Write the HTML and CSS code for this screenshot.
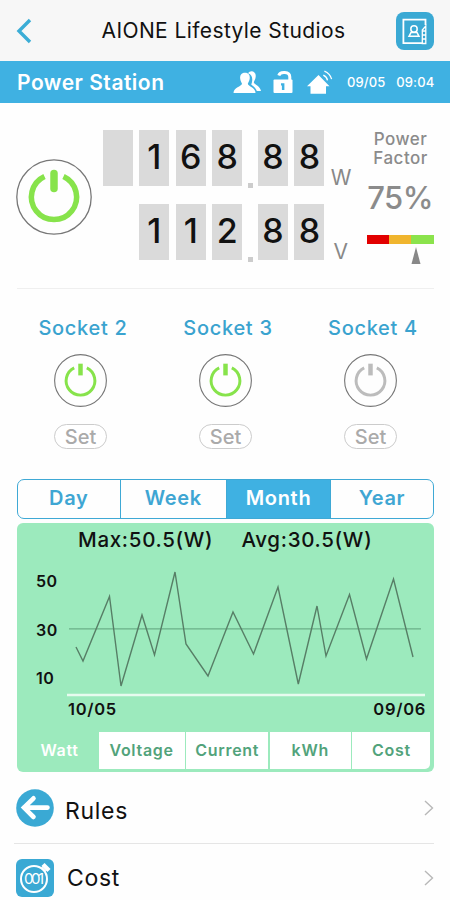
FILE: index.html
```html
<!DOCTYPE html>
<html lang="en">
<head>
    <meta charset="UTF-8">
    <meta name="viewport" content="width=device-width, initial-scale=1.0">
    <title>Power Station</title>
    <link rel="stylesheet" href="styles.css">
</head>
<body>
    <!-- Reusable icons -->
    <svg class="sprite" width="0" height="0">
        <symbol id="power" viewBox="0 0 52 52">
            <circle cx="26" cy="26" r="25.4" fill="none" stroke="#777" stroke-width="1.1"/>
            <path d="M19.8 13.6A14.1 14.1 0 1 0 32.2 13.6" fill="none" stroke="currentColor" stroke-width="2.9"/>
            <path d="M26 9.5V21" fill="none" stroke="currentColor" stroke-width="4.4"/>
        </symbol>
        <symbol id="chevron" viewBox="0 0 10 16">
            <path d="M1 1L8.5 8L1 15" fill="none" stroke="#b8b8b8" stroke-width="1.4"/>
        </symbol>
    </svg>

    <header class="top">
        <svg class="back" width="16" height="26" viewBox="0 0 16 26">
            <path d="M14 2L3 13L14 24" fill="none" stroke="#3badd6" stroke-width="3.4"/>
        </svg>
        <h1>AIONE Lifestyle Studios</h1>
        <svg class="contacts" width="38" height="38" viewBox="0 0 38 38">
            <rect width="38" height="38" rx="8" fill="#3aa9d4"/>
            <g fill="none" stroke="#fff">
                <path d="M29.500 13V7.600H7.400V31.200H27" stroke-width="1.800"/>
                <path d="M26.300 31.500V18L29.800 14V31.500Z" stroke-width="1.300"/>
                <path d="M26 19H30M26 23H30M26 27H30" stroke-width="1.500"/>
                <circle cx="18" cy="17" r="3.2" stroke-width="1.5"/>
                <path d="M13 24.300L15 20.500H21L23 24.300Z" stroke-width="1.500"/>
            </g>
        </svg>
    </header>

    <div class="station">
        <h2>Power Station</h2>
        <div class="status">
            <svg width="29" height="24" viewBox="0 0 29 24" fill="#fff">
                <path d="M15 3.2C17-.3 23.2.6 22.7 6.5C22.5 9.3 21.4 10.7 20.8 12.2C21.3 14.8 27 15.6 28 21H23.8C22.7 17.5 20 16.5 18.2 14.6C19.7 11 20.4 5 15 3.2Z"/>
                <path d="M12 2.7C15.7 2.7 17.2 5.3 16.7 8.7C16.4 11 15.3 12.3 14.8 13.7C15.3 16.6 22.3 17 22.5 23H.5C.7 17 8.4 16.6 9 13.7C8.5 12.3 7.4 11 7.2 8.7C6.8 5.3 8.3 2.7 12 2.7Z"/>
            </svg>
            <svg class="lock" width="20" height="24" viewBox="0 0 20 24">
                <path d="M5.8 5.5C7 1.3 16.8 1.2 16.8 7V11" fill="none" stroke="#fff" stroke-width="3"/>
                <rect x=".5" y="9.500" width="19" height="13.500" rx="1" fill="#fff"/>
                <path d="M8 13.200H11.400V20H8.900V15.500H8Z" fill="#3fb1e2"/>
            </svg>
            <svg width="28" height="25" viewBox="0 0 28 25">
                <path d="M11.500 5L22.500 16.200H19V23.800H3.500V16.200H0Z" fill="#fff"/>
                <path d="M16.300 5.200Q19.900 6.800 20.500 10.300M17.400 1.100Q23.200 3.600 24.600 9.200" fill="none" stroke="#fff" stroke-width="1.300"/>
            </svg>
        </div>
        <div class="clock"><span>09/05</span><span>09:04</span></div>
    </div>

    <section class="meter">
        <svg class="main-power on" width="76" height="76" viewBox="0 0 76 76">
            <circle cx="38" cy="38" r="37.200" fill="none" stroke="#777" stroke-width="1.300"/>
            <path d="M28.500 17.500A22.600 22.600 0 1 0 47.500 17.500" fill="none" stroke="currentColor" stroke-width="5.500"/>
            <path d="M38 14.500V29.500" fill="none" stroke="currentColor" stroke-width="7.500" stroke-linecap="round"/>
        </svg>

        <div class="readings">
            <div class="reading">
                <span class="digit"></span><span class="digit">1</span><span class="digit">6</span><span class="digit">8</span>
                <i class="dot"></i>
                <span class="digit">8</span><span class="digit">8</span>
                <span class="unit">W</span>
            </div>
            <div class="reading volts">
                <span class="digit">1</span><span class="digit">1</span><span class="digit">2</span>
                <i class="dot"></i>
                <span class="digit">8</span><span class="digit">8</span>
                <span class="unit">V</span>
            </div>
        </div>

        <div class="factor">
            <p>Power<br>Factor</p>
            <strong>75%</strong>
            <div class="scale"><i class="low"></i><i class="mid"></i><i class="high"></i></div>
            <svg class="pointer" width="10" height="17" viewBox="0 0 10 17">
                <path d="M5 0L9.5 17H.5Z" fill="#888"/>
            </svg>
        </div>
    </section>

    <section class="sockets">
        <div class="socket">
            <h3>Socket 2</h3>
            <svg class="on" width="53" height="53"><use href="#power"/></svg>
            <button class="set">Set</button>
        </div>
        <div class="socket">
            <h3>Socket 3</h3>
            <svg class="on" width="53" height="53"><use href="#power"/></svg>
            <button class="set">Set</button>
        </div>
        <div class="socket">
            <h3>Socket 4</h3>
            <svg class="off" width="53" height="53"><use href="#power"/></svg>
            <button class="set">Set</button>
        </div>
    </section>

    <nav class="periods">
        <a>Day</a>
        <a>Week</a>
        <a class="active">Month</a>
        <a>Year</a>
    </nav>

    <section class="chart">
        <div class="summary"><span>Max:50.5(W)</span><span>Avg:30.5(W)</span></div>
        <div class="plot">
            <div class="y-axis"><span>50</span><span>30</span><span>10</span></div>
            <svg width="358" height="140" viewBox="67 557 358 140">
                <path d="M69 628.8H421" stroke="#6aaf88" stroke-width="1.3"/>
                <polyline points="76,647 83,661 109.5,596.5 121,686 142,615 154.5,655 175,572 186,644 208,676 233,612 253.5,654 278,587 298.3,684 317,606 326,656 349.5,594.5 366.5,659 393.5,579 413,657" fill="none" stroke="#577e66" stroke-width="1.4"/>
                <path d="M67 695H425" stroke="#e7fbef" stroke-width="2.4"/>
            </svg>
        </div>
        <div class="x-axis"><span>10/05</span><span>09/06</span></div>
        <div class="measures">
            <a class="active">Watt</a>
            <a>Voltage</a>
            <a>Current</a>
            <a>kWh</a>
            <a>Cost</a>
        </div>
    </section>

    <div class="menu">
        <a class="item">
            <svg width="38" height="38" viewBox="0 0 38 38">
                <circle cx="19" cy="19" r="18.8" fill="#3aa9d4"/>
                <path d="M31.5 18.6H8M17.5 9.3L8 18.6L17.5 28" fill="none" stroke="#fff" stroke-width="4.6" stroke-linecap="round"/>
            </svg>
            <span>Rules</span>
            <svg class="go" width="10" height="16"><use href="#chevron"/></svg>
        </a>
        <a class="item cost">
            <svg width="38" height="38" viewBox="0 0 38 38">
                <rect width="38" height="38" rx="6" fill="#3aa9d4"/>
                <circle cx="18" cy="20" r="13" fill="none" stroke="#fff" stroke-width="2"/>
                <path d="M27 5.5L33 11.5" stroke="#fff" stroke-width="4.5"/>
                <path d="M25.5 8.5L29.5 12.5" stroke="#fff" stroke-width="2"/>
                <text x="18" y="25.3" text-anchor="middle" textLength="20" class="counter">001</text>
            </svg>
            <span>Cost</span>
            <svg class="go" width="10" height="16"><use href="#chevron"/></svg>
        </a>
    </div>
</body>
</html>
```

FILE: styles.css
```css
* {
    box-sizing: border-box;
}

body {
    margin: 0;
    height: 900px;
    overflow: hidden;
    background: #fefefe;
    font-family: Inter, "Liberation Sans", sans-serif;
    color: #111;
}

h1, h2, h3, p {
    margin: 0;
    font-weight: 400;
}

svg {
    display: block;
    flex-shrink: 0;
}

.sprite {
    position: absolute;
}

/* Header */
.top {
    display: flex;
    align-items: center;
    height: 61px;
    padding: 0 16px;
    background: #f7f7f7;
}

.top h1 {
    flex: 1;
    padding-left: 19px;
    text-align: center;
    font-size: 21px;
    letter-spacing: 0.4px;
    white-space: nowrap;
}

.station {
    display: flex;
    align-items: center;
    height: 42px;
    padding-left: 17px;
    background: #3fb1e2;
    color: #fff;
}

.station h2 {
    width: 216px;
    font-size: 21px;
    font-weight: 600;
    letter-spacing: 0.5px;
}

.status {
    display: flex;
    align-items: center;
    gap: 11px;
}

.lock {
    margin-right: 3px;
}

.clock {
    display: flex;
    gap: 11px;
    margin-left: 12px;
    font-size: 13px;
    font-weight: 500;
    letter-spacing: 0.1px;
}

/* Readings */
.meter {
    display: flex;
    height: 186px;
    margin: 0 16px 0 17px;
    border-bottom: 1px solid #efefef;
}

.main-power {
    margin: 56px 10px 0 -1px;
}

.on {
    color: #87e34b;
}

.off {
    color: #bcbcbc;
}

.readings {
    display: flex;
    flex-direction: column;
    align-items: flex-start;
    gap: 18px;
    width: 256px;
    padding: 27px 0 0 1px;
}

.reading {
    display: flex;
    gap: 6.4px;
    height: 56px;
}

.volts {
    padding-left: 36.4px;
}

.digit {
    width: 30px;
    background: #dadada;
    text-align: center;
    font-size: 34px;
    font-weight: 450;
    line-height: 54px;
}

.dot {
    align-self: flex-end;
    width: 5px;
    height: 5px;
    margin: 0 1px -2px -1px;
    background: #ccc;
}

.digit + .dot + .digit {
    margin-left: -2px;
}

.unit {
    align-self: flex-end;
    min-width: 20px;
    color: #888;
    text-align: center;
    font-size: 21px;
    line-height: 17px;
}

.factor {
    display: flex;
    flex-direction: column;
    align-items: center;
    width: 68px;
    margin-left: 9px;
    padding-top: 27px;
    color: #8b8b8b;
}

.factor p {
    padding-left: 1px;
    text-align: center;
    font-size: 17px;
    font-weight: 500;
    letter-spacing: 0.5px;
    line-height: 19px;
}

.factor strong {
    height: 57px;
    font-size: 31px;
    font-weight: 450;
    letter-spacing: -0.6px;
    line-height: 59px;
}

.scale {
    display: flex;
    width: 67px;
    height: 9px;
    margin-top: 10px;
}

.scale i {
    flex: 1;
}

.low {
    background: #e20000;
}

.mid {
    background: #f0b52e;
}

.high {
    background: #8be34c;
}

.pointer {
    margin: 3px 0 0 31px;
}

/* Sockets */
.sockets {
    display: grid;
    grid-template-columns: repeat(3, 145px);
    height: 190px;
    margin-left: 8px;
    padding-top: 26px;
}

.socket {
    display: flex;
    flex-direction: column;
    align-items: center;
}

.socket h3 {
    margin: 0 0 13px 5px;
    color: #3aa3cf;
    font-size: 20px;
    font-weight: 500;
    letter-spacing: 0.7px;
    line-height: 26px;
}

.set {
    width: 53px;
    height: 25px;
    margin-top: 17px;
    padding: 0;
    border: 1px solid #ccc;
    border-radius: 13px;
    background: #fff;
    color: #aaa;
    font: 500 20px/22px Inter, "Liberation Sans", sans-serif;
}

/* Period tabs */
.periods {
    display: grid;
    grid-template-columns: 101.5px 106.5px 104px 1fr;
    height: 40px;
    margin: 0 16px 0 17px;
    border: 1px solid #3fa9d5;
    border-radius: 7px;
    overflow: hidden;
}

.periods a {
    color: #3fa6d3;
    text-align: center;
    font-size: 20px;
    font-weight: 600;
    letter-spacing: 0.7px;
    line-height: 37px;
}

.periods a + a {
    border-left: 1px solid #3fa9d5;
}

.periods .active {
    background: #3fb1e2;
    color: #fff;
}

/* Chart */
.chart {
    height: 249px;
    margin: 4px 16px 0 17px;
    border-radius: 6px;
    background: #9ceabd;
}

.summary {
    display: flex;
    gap: 28px;
    height: 34px;
    padding-left: 61px;
    font-size: 20.5px;
    font-weight: 500;
    letter-spacing: 0.7px;
    line-height: 34px;
}

.plot {
    display: flex;
}

.y-axis {
    display: flex;
    flex-direction: column;
    justify-content: space-between;
    width: 50px;
    height: 132px;
    padding: 13px 0 0 19px;
    font-size: 16px;
    font-weight: 600;
    letter-spacing: 0.5px;
    line-height: 22px;
}

.x-axis {
    display: flex;
    justify-content: space-between;
    height: 35px;
    padding: 1px 8px 0 51px;
    font-size: 16.5px;
    font-weight: 600;
    letter-spacing: 0.7px;
    line-height: 22px;
}

.measures {
    display: grid;
    grid-template-columns: 80px 86px 82px 81px 78px;
    gap: 1.6px;
    height: 37px;
}

.measures a {
    background: #fff;
    color: #52a37b;
    text-align: center;
    font-size: 16px;
    font-weight: 600;
    letter-spacing: 0.7px;
    line-height: 37px;
}

.measures a:last-child {
    border-bottom-right-radius: 5px;
}

.measures .active {
    padding-left: 5px;
    background: none;
    color: #fff;
}

/* Menu rows */
.item {
    display: flex;
    align-items: center;
    height: 72px;
    margin: 0 16px 0 14px;
    padding-left: 2px;
    border-bottom: 1px solid #e5e5e5;
}

.item span {
    flex: 1;
    padding: 6px 0 0 11px;
    font-size: 23px;
    letter-spacing: 0.7px;
}

.item.cost {
    height: 68px;
}

.item.cost span {
    padding: 0 0 0 13px;
}

.counter {
    fill: #fff;
    font-size: 15px;
}
```
